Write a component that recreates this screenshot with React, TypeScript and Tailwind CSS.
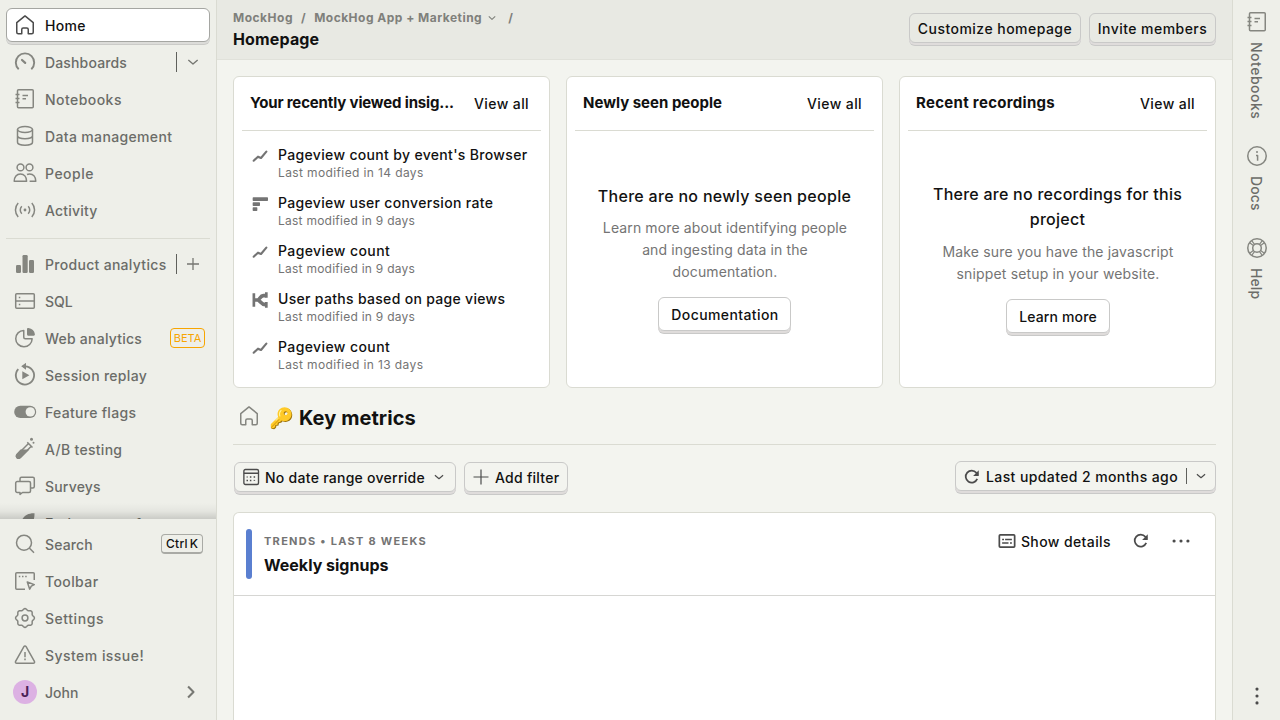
import React from "react";

type P = { children: React.ReactNode; size?: number; className?: string };

function Icon({ children, size = 24, className = "" }: P) {
  return (
    <svg
      width={size}
      height={size}
      viewBox="0 0 24 24"
      fill="none"
      stroke="currentColor"
      strokeWidth="1.5"
      strokeLinejoin="round"
      className={`shrink-0 ${className}`}
    >
      {children}
    </svg>
  );
}

const home = (
  <path d="M3.750 9.600 12 2.900l8.250 6.700v9.650c0 .83-.67 1.500-1.500 1.500h-3.500V16.500a1.500 1.500 0 0 0-1.500-1.500h-3.500a1.500 1.500 0 0 0-1.500 1.500v4.250h-3.500a1.500 1.500 0 0 1-1.500-1.500V9.600Z" />
);
const dashboards = (
  <>
    <path d="M5.700 19.300A9.200 9.200 0 1 1 18.300 19.300" strokeWidth="1.900" />
    <path d="m9 10 3.200 2.900" strokeWidth="2.200" strokeLinecap="round" />
  </>
);
const notebooks = (
  <>
    <rect x="4.500" y="2.750" width="15.750" height="18" rx="1" />
    <path d="M2.500 7.500h4M2.500 11.500h4M2.500 15.500h4M9.500 8.500h5.500M9.500 11.800h3.500" />
  </>
);
const database = (
  <>
    <ellipse cx="12" cy="5.500" rx="7.500" ry="3" />
    <path d="M4.500 5.500v12.800c0 1.700 3.400 3 7.500 3s7.500-1.300 7.500-3V5.500M4.500 11.800c0 1.700 3.400 3 7.500 3s7.500-1.300 7.500-3" />
  </>
);
const people = (
  <>
    <circle cx="7.500" cy="6.400" r="3.400" />
    <circle cx="16.500" cy="6.400" r="3.400" />
    <path d="M1.200 20.200c0-4.400 2.500-7.300 6.200-7.300s6.200 2.900 6.200 7.300ZM14 13.500c.8-.4 1.600-.6 2.600-.6 3.700 0 6.200 2.900 6.200 7.300h-6.200" />
  </>
);
const activity = (
  <>
    <circle cx="12" cy="12" r="1.400" fill="currentColor" stroke="none" />
    <path d="M8.800 8.200a5.500 5.500 0 0 0 0 7.600M15.200 8.200a5.500 5.500 0 0 1 0 7.600M5.200 5a10.300 10.300 0 0 0 0 14M18.800 5a10.300 10.300 0 0 1 0 14" />
  </>
);
const analytics = (
  <g fill="currentColor" stroke="none">
    <rect x="3" y="13" width="5" height="8" rx="1.200" />
    <rect x="9.500" y="3" width="5.200" height="18" rx="1.200" />
    <rect x="16" y="8" width="5" height="13" rx="1.200" />
  </g>
);
const sql = (
  <>
    <rect x="2.700" y="4.750" width="18.600" height="14.500" rx="1" />
    <path d="M2.700 12h18.600" />
    <path d="M5.800 8.500h1.500M5.800 15.500h1.500" />
  </>
);
const pie = (
  <>
    <path d="M10.750 4.400a8.200 8.200 0 1 0 8.400 8.400h-6.900a1.500 1.500 0 0 1-1.500-1.500V4.400Z" />
    <path d="M14 3.200c0-.9.5-1.400 1.400-1.300a7.500 7.500 0 0 1 6.500 6.400c.1.900-.4 1.400-1.200 1.400h-5.200c-.9 0-1.500-.6-1.500-1.500Z" fill="currentColor" stroke="none" />
  </>
);
const replay = (
  <>
    <path d="M5.300 6.200a9.100 9.100 0 1 0 6.900-2.900H10" strokeWidth="1.800" />
    <path d="M8.200 3.300 13 -.2v7ZM9.300 8.200v8l7.100-4Z" fill="currentColor" stroke="none" />
  </>
);
const flags = (
  <>
    <rect x="1.200" y="5.800" width="22" height="12.200" rx="6.100" fill="currentColor" stroke="none" />
    <circle cx="17.300" cy="11.900" r="4.700" fill="#eeefe9" stroke="none" />
  </>
);
const flask = (
  <>
    <path d="m14.300 5.300 5.200 5.200M15.500 6.500 4 18a2 2 0 0 0 0 2.600c.8.8 2 .8 2.800 0L18.300 9.300" />
    <path d="M7.500 12.500h9L8 21c-3.200 2.500-7-.8-4.700-4Z" fill="currentColor" stroke="none" />
    <circle cx="18.500" cy="2.200" r="1.500" fill="currentColor" stroke="none" />
    <circle cx="20.500" cy="5.800" r="1" fill="currentColor" stroke="none" />
  </>
);
const surveys = (
  <>
    <path d="M7 7.500V4.750a1.500 1.500 0 0 1 1.500-1.500h11.300a1.500 1.500 0 0 1 1.500 1.500v7.800a1.500 1.500 0 0 1-1.500 1.500h-2.300" />
    <path d="M4.200 7.500H16a1.500 1.500 0 0 1 1.500 1.500v8a1.500 1.500 0 0 1-1.500 1.500H9.500L7 20.400v-1.900H4.200A1.500 1.500 0 0 1 2.700 17V9a1.500 1.500 0 0 1 1.500-1.500Z" />
  </>
);
const rocket = (
  <path d="M21.500 2.300c-7-.3-11.500 3.200-13.500 8.700L4 12.500 11.500 20l1.500-4c5.500-2 8.800-6.200 8.500-13.700Z" fill="currentColor" stroke="none" />
);
const search = (
  <>
    <circle cx="11" cy="10.700" r="7.500" />
    <path d="m16.300 16 4.700 4.700" />
  </>
);
const toolbar = (
  <>
    <path d="M21.250 11V4.750a1 1 0 0 0-1-1H3.750a1 1 0 0 0-1 1v14.500a1 1 0 0 0 1 1H12" />
    <path d="M5.800 7.500h1.500M9 7.500h1.500M12.200 7.500h1.500" />
    <path d="m14.300 13 7 2.600-3 1.500-1.600 3.100Z" />
  </>
);
const gearPoints = Array.from({ length: 96 }, (_, i) => {
  const a = (i / 96) * Math.PI * 2;
  const r = 8.65 + 0.75 * Math.cos(8 * a);
  return `${(12 + r * Math.cos(a)).toFixed(2)},${(12 + r * Math.sin(a)).toFixed(2)}`;
}).join(" ");
const gear = (
  <>
    <circle cx="12" cy="12" r="2.900" />
    <polygon points={gearPoints} />
  </>
);
const warning = (
  <>
    <path d="M10.900 3.600a1.300 1.300 0 0 1 2.200 0l8.300 14.700c.5.9 0 1.900-1.100 1.900H3.700c-1.100 0-1.600-1-1.100-1.900Z" />
    <path d="M12 9v5.200M12 15.600v1.700" />
  </>
);
const chevronDown = <path d="m5 9 7 6 7-6" strokeWidth="2" />;
const plus = <path d="M12 3v18M3 12h18" strokeWidth="1.900" />;
const refresh = (
  <>
    <path d="M19 14.600A8 8 0 1 1 17.800 6.400L20 8.800" strokeWidth="2.300" />
    <path d="M21 3v7.500h-7.500Z" fill="currentColor" stroke="none" />
  </>
);
const trend = <path d="m2.500 19 6.500-6 4.500 2 8-9.500" strokeWidth="3.200" strokeLinecap="round" />;
const funnel = (
  <g fill="currentColor" stroke="none">
    <rect x="1" y="2" width="23" height="5.500" rx="1" />
    <rect x="1" y="9.500" width="11" height="5.500" rx="1" />
    <rect x="1" y="17" width="7" height="5.500" rx="1" />
  </g>
);
const paths = (
  <>
    <path d="M2.800 2v20M21.500 .5v8M21.500 15v8.500" strokeWidth="4" />
    <path d="M4 12h4c4 0 4-6.500 9-6.500h3M8 12c4 0 5 7 12 7" strokeWidth="5.500" />
  </>
);
const calendar = (
  <>
    <rect x="2.500" y="2" width="19.500" height="20" rx="2" strokeWidth="1.800" />
    <path d="M2.500 7h19.500" strokeWidth="2" />
    <path d="M10.500 12h2M15.500 12h2M6 16.500h2M10.500 16.500h2" strokeWidth="2" />
    <path d="M15.500 16.500h2M6 12h2" strokeWidth="1.200" />
  </>
);
const details = (
  <>
    <rect x="1.800" y="3.800" width="20.400" height="16.400" rx="1.200" strokeWidth="2.300" />
    <path d="M5.500 10h2.500M9.500 10h9M5.500 14.700h8.500M16 14.700h2.500" strokeWidth="2" />
  </>
);
const info = (
  <>
    <circle cx="12" cy="12" r="9.250" />
    <path d="M11 11.500h1.600v5.200" strokeWidth="1.500" />
    <circle cx="12" cy="8" r="1" fill="currentColor" stroke="none" />
  </>
);
const support = (
  <>
    <circle cx="12" cy="12" r="9.250" />
    <circle cx="12" cy="12" r="4.300" />
    <path d="m4.700 6.700 4 3M6.700 4.700l3 4M19.300 6.700l-4 3M17.300 4.700l-3 4M4.700 17.300l4-3M6.700 19.300l3-4M19.300 17.300l-4-3M17.300 19.300l-3-4" strokeWidth="1.200" />
  </>
);
const dots = (
  <g fill="currentColor" stroke="none">
    <circle cx="3.700" cy="12" r="1.900" />
    <circle cx="12" cy="12" r="1.900" />
    <circle cx="20.300" cy="12" r="1.900" />
  </g>
);

type NavProps = { icon: React.ReactNode; label: string; tracking?: string; right?: React.ReactNode };

function NavItem({ icon, label, tracking = "tracking-[0.3px]", right }: NavProps) {
  return (
    <div className="flex h-[37px] shrink-0 items-center pb-px pl-[7px] text-[#6b6c68]">
      <Icon className="text-[#858680]">{icon}</Icon>
      <span className={`ml-2 flex-1 whitespace-nowrap pt-0.5 ${tracking}`}>{label}</span>
      {right}
    </div>
  );
}

function SideAction({ icon }: { icon: React.ReactNode }) {
  return (
    <div className="flex h-5 w-[34px] items-center border-l border-[#5f605c] pl-2">
      <Icon size={16} className="text-[#757671]">{icon}</Icon>
    </div>
  );
}

function Button({ children, className = "" }: { children: React.ReactNode; className?: string }) {
  return (
    <div
      className={`flex items-center whitespace-nowrap rounded-[6px] border border-[#c9c9c8] shadow-[0_2px_0_#dfdcdb,0_3px_0_#c9c9c8] ${className}`}
    >
      {children}
    </div>
  );
}

function Card({ title, tracking, children }: { title: string; tracking: string; children: React.ReactNode }) {
  return (
    <section className="flex h-[312px] flex-col rounded-[6px] border border-[#dadbd2] bg-white px-2">
      <div className="flex h-[54px] shrink-0 items-center justify-between border-b border-[#dadbd2] pl-2 pr-3">
        <h2 className={`whitespace-nowrap pb-px text-[15px] font-bold leading-6 ${tracking}`}>{title}</h2>
        <span className="pt-px tracking-[0.4px]">View all</span>
      </div>
      {children}
    </section>
  );
}

const insights = [
  { icon: trend, name: "Pageview count by event's Browser", days: 14, tracking: "tracking-[0.33px]" },
  { icon: funnel, name: "Pageview user conversion rate", days: 9, tracking: "tracking-[0.33px]" },
  { icon: trend, name: "Pageview count", days: 9, tracking: "tracking-[0.4px]" },
  { icon: paths, name: "User paths based on page views", days: 9, tracking: "tracking-[0.31px]" },
  { icon: trend, name: "Pageview count", days: 13, tracking: "tracking-[0.4px]" },
];

function Sidebar() {
  return (
    <nav className="flex w-[217px] shrink-0 flex-col border-r border-[#dadbd2] bg-[#eeefe9]">
      <div className="relative flex h-[519px] shrink-0 flex-col overflow-hidden px-1.5 pt-2">
        <div className="mb-[2px] flex h-[34px] shrink-0 items-center rounded-[6px] border border-[#a5a6a2] bg-white pl-1.5 shadow-[0_2px_0_#dcdcd9,0_3px_0_#cbcbc8]">
          <Icon className="text-[#4b4b4b]">{home}</Icon>
          <span className="ml-2 pt-0.5 tracking-[0.3px]">Home</span>
        </div>
        <NavItem icon={dashboards} label="Dashboards" tracking="tracking-[0.15px]" right={<SideAction icon={chevronDown} />} />
        <NavItem icon={notebooks} label="Notebooks" tracking="tracking-[0.45px]" />
        <NavItem icon={database} label="Data management" tracking="tracking-[0.35px]" />
        <NavItem icon={people} label="People" tracking="tracking-[0.5px]" />
        <NavItem icon={activity} label="Activity" tracking="tracking-[0.2px]" />
        <div className="mb-[7px] mt-[9px] h-px shrink-0 bg-[#dadbd2]" />
        <NavItem icon={analytics} label="Product analytics" right={<SideAction icon={plus} />} />
        <NavItem icon={sql} label="SQL" tracking="tracking-normal" />
        <NavItem
          icon={pie}
          label="Web analytics"
          tracking="tracking-[0.23px]"
          right={
            <span className="mr-[5px] flex h-5 w-[35px] items-center justify-center rounded-[4px] border border-[#f7a501] text-[11px] font-normal text-[#f7a501]">
              BETA
            </span>
          }
        />
        <NavItem icon={replay} label="Session replay" />
        <NavItem icon={flags} label="Feature flags" />
        <NavItem icon={flask} label="A/B testing" />
        <NavItem icon={surveys} label="Surveys" tracking="tracking-[0.2px]" />
        <NavItem icon={rocket} label="Early access features" tracking="tracking-[0.15px]" />
        <div className="absolute inset-x-0 bottom-0 h-4 bg-linear-to-t from-black/15 via-black/4 to-transparent" />
      </div>
      <div className="relative flex-1 bg-[#eeefe9] px-1.5 pt-[7px]">
        <NavItem
          icon={search}
          label="Search"
          tracking="tracking-[0.15px]"
          right={
            <span className="mr-[7px] flex h-5 w-[42px] items-center justify-center gap-[2px] rounded-[4px] border border-b-2 border-[#a9aaa5] text-[12px] text-[#111]">
              <span className="tracking-[0.3px]">Ctrl</span>
              <span>K</span>
            </span>
          }
        />
        <NavItem icon={toolbar} label="Toolbar" tracking="tracking-[0.4px]" />
        <NavItem icon={gear} label="Settings" tracking="tracking-[0.55px]" />
        <NavItem icon={warning} label="System issue!" tracking="tracking-[0.46px]" />
        <div className="flex h-[37px] items-center pb-px pl-[7px] text-[#6b6c68]">
          <span className="flex size-6 items-center justify-center rounded-full bg-[#dcb1e3] text-[14px] font-bold text-[#4b1f57]">J</span>
          <span className="ml-2 flex-1 pt-0.5">John</span>
          <Icon size={20} className="mr-[9px] text-[#777873]">
            <path d="m8.500 5.500 6.500 6.500-6.500 6.500" strokeWidth="2.500" />
          </Icon>
        </div>
      </div>
    </nav>
  );
}

type RightProps = { icon: React.ReactNode; label: string; className: string };

function RightItem({ icon, label, className }: RightProps) {
  return (
    <div className={`flex shrink-0 flex-col items-center gap-2 text-[#6b6c68] ${className}`}>
      <Icon className="text-[#858680]">{icon}</Icon>
      <span className="mr-0.5 leading-5 [writing-mode:vertical-rl]">{label}</span>
    </div>
  );
}

export default function App() {
  return (
    <div className="flex h-[720px] w-[1280px] overflow-hidden bg-[#f3f4ef] font-['Inter',sans-serif] text-[14px] font-medium leading-5 text-[#111]">
      <Sidebar />
      <main className="flex w-[1015px] shrink-0 flex-col">
        <header className="flex h-[60px] shrink-0 justify-between border-b border-[#e0e1da] bg-[#e8e9e3] pl-4 pr-4">
          <div className="pt-2.5">
            <div className="flex h-4 items-center text-[12px] font-bold leading-4 text-[#7f807b]">
              <span className="tracking-[0.5px]">MockHog</span>
              <span className="ml-2">/</span>
              <span className="ml-[8.500px] tracking-[0.48px]">MockHog App + Marketing</span>
              <Icon size={14} className="ml-[3px]">
                <path d="m6.500 9.200 5.500 5.100 5.500-5.100" strokeWidth="1.900" />
              </Icon>
              <span className="ml-[9px]">/</span>
            </div>
            <h1 className="mt-[3px] text-[16px] font-bold leading-5 tracking-[0.15px]">Homepage</h1>
          </div>
          <div className="flex gap-2 pt-[13px]">
            <Button className="h-[30px] w-[172px] justify-center pt-px tracking-[0.46px]">Customize homepage</Button>
            <Button className="h-[30px] w-[127px] justify-center pt-px tracking-[0.45px]">Invite members</Button>
          </div>
        </header>
        <div className="flex min-h-0 flex-1 flex-col px-4 pt-4">
          <div className="grid grid-cols-3 gap-4">
            <Card title="Your recently viewed insig..." tracking="tracking-[-0.15px]">
              <div className="pt-2">
                {insights.map((it, i) => (
                  <div key={i} className="flex h-12 pl-[10px] pt-[6px]">
                    <Icon size={16} className="mt-[3px] text-[#747474]">{it.icon}</Icon>
                    <div className="ml-[10px] whitespace-nowrap">
                      <div className={`leading-5 ${it.tracking}`}>{it.name}</div>
                      <div
                        className={`text-[12px] font-normal leading-4 text-[#747474] ${it.days > 9 ? "tracking-[0.38px]" : "tracking-[0.25px]"}`}
                      >
                        Last modified in {it.days} days
                      </div>
                    </div>
                  </div>
                ))}
              </div>
            </Card>
            <Card title="Newly seen people" tracking="tracking-normal">
              <div className="flex flex-col items-center pt-[53px] text-center">
                <h3 className="text-[16px] leading-[25px] tracking-[0.3px]">There are no newly seen people</h3>
                <p className="mt-2 w-[250px] pl-px font-normal leading-[22px] tracking-[0.12px] text-[#747474]">
                  Learn more about identifying people and ingesting data in the documentation.
                </p>
                <Button className="mt-[14px] h-[34px] w-[133px] justify-center pl-px pt-px tracking-[0.4px]">Documentation</Button>
              </div>
            </Card>
            <Card title="Recent recordings" tracking="tracking-[0.3px]">
              <div className="flex flex-col items-center pt-[51px] text-center">
                <h3 className="w-[260px] text-[16px] leading-[25px] tracking-[0.25px]">There are no recordings for this project</h3>
                <p className="mt-[9px] w-[250px] pl-px font-normal leading-[22px] tracking-[0.16px] text-[#747474]">
                  Make sure you have the javascript snippet setup in your website.
                </p>
                <Button className="mt-[14px] h-[34px] w-[104px] justify-center pl-px pt-px tracking-[0.15px]">Learn more</Button>
              </div>
            </Card>
          </div>
          <div className="flex h-[57px] shrink-0 items-center border-b border-[#dadbd2] pl-1">
            <Icon className="text-[#858680]">{home}</Icon>
            <h2 className="ml-2 pt-[3px] text-[20px] font-bold leading-7 tracking-[0.08px]">🔑 Key metrics</h2>
          </div>
          <div className="flex shrink-0 justify-between pt-4">
            <div className="flex gap-2 pl-px pt-px">
              <Button className="h-[30px] w-[222px] pl-2 pt-px">
                <Icon size={18} className="-ml-px mb-px mr-[5px] text-[#4b4b4b]">{calendar}</Icon>
                <span className="tracking-[0.27px]">No date range override</span>
                <Icon size={14} className="mb-0.5 ml-[7px] text-[#4b4b4b]">{chevronDown}</Icon>
              </Button>
              <Button className="h-[30px] w-[104px] pl-2 pt-px">
                <Icon size={18} className="-ml-px mb-px mr-[5px] text-[#4b4b4b]">
                  <path d="M12 2v20M2 12h20" strokeWidth="1.600" />
                </Icon>
                <span className="tracking-[0.27px]">Add filter</span>
              </Button>
            </div>
            <Button className="h-[30px] w-[261px] pl-2 pt-px">
              <Icon size={18} className="-ml-px mr-[5px] text-[#4b4b4b]">{refresh}</Icon>
              <span className="tracking-[0.4px]">Last updated 2 months ago</span>
              <span className="mb-px ml-2 h-4 w-px bg-[#5f605c]" />
              <Icon size={14} className="mb-0.5 ml-[7px] text-[#4b4b4b]">{chevronDown}</Icon>
            </Button>
          </div>
          <section className="mt-[20px] flex-1 rounded-t-[6px] border border-b-0 border-[#dadbd2] bg-white">
            <div className="flex h-[83px] justify-between border-b border-[#d6d6d3] pl-3 pt-4">
              <div className="flex">
                <span className="h-[50px] w-1.5 rounded-[3px] bg-[#5a7fd0]" />
                <div className="ml-3">
                  <div className="mt-1 text-[11px] font-bold leading-4 tracking-[1.28px] text-[#747474]">TRENDS • LAST 8 WEEKS</div>
                  <h3 className="mt-1.5 text-[16px] font-bold leading-5">Weekly signups</h3>
                </div>
              </div>
              <div className="flex h-6 items-center pr-6">
                <Icon size={18} className="mr-[5px] text-[#4b4b4b]">{details}</Icon>
                <span className="pt-px tracking-[0.4px]">Show details</span>
                <Icon size={18} className="ml-[21px] text-[#4b4b4b]">{refresh}</Icon>
                <Icon size={20} className="ml-[21px] text-[#4b4b4b]">{dots}</Icon>
              </div>
            </div>
          </section>
        </div>
      </main>
      <aside className="flex w-12 shrink-0 flex-col items-center border-l border-[#dadbd2] bg-[#eeefe9] pt-2.5">
        <RightItem icon={notebooks} label="Notebooks" className="h-[134px] tracking-[0.5px]" />
        <RightItem icon={info} label="Docs" className="h-[92px] tracking-[0.1px]" />
        <RightItem icon={support} label="Help" className="h-[92px] tracking-[0.1px]" />
        <Icon size={20} className="mb-[14px] mt-auto rotate-90 text-[#4b4b4b]">{dots}</Icon>
      </aside>
    </div>
  );
}
